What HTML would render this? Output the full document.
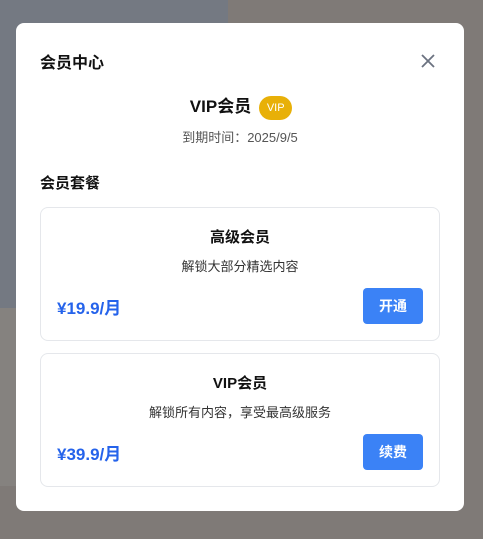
<!DOCTYPE html>
<html><head><meta charset="utf-8"><style>
*{margin:0;padding:0;box-sizing:border-box}
body{width:483px;height:539px;overflow:hidden;position:relative;background:#7f7a77;font-family:"Liberation Sans","Noto Sans CJK SC",sans-serif}
.l{position:absolute;left:0;top:0;width:228px;height:308px;background:#747982}
.l2{position:absolute;left:0;top:308px;width:16px;height:178px;background:#85827f}
.m{position:absolute;left:16px;top:23px;width:448px;height:488px;background:#fff;border-radius:8px}
.t{position:absolute;left:24px;top:26px;font-size:16px;font-weight:bold;color:#111}
.x{position:absolute;left:404px;top:30px}
.v{position:absolute;left:0;width:100%;text-align:center}
.badge{display:inline-block;background:#e8b008;color:#fff;font-size:11px;font-weight:normal;border-radius:12px;width:33px;height:24px;line-height:24px;vertical-align:middle;margin-left:8px;text-align:center}
.card{position:absolute;left:24px;width:400px;height:134px;border:1px solid #e5e7eb;border-radius:8px}
.ct{position:absolute;top:18px;width:100%;text-align:center;font-size:15px;font-weight:bold;color:#111}
.cd{position:absolute;top:48px;width:100%;text-align:center;font-size:13px;color:#333}
.p{position:absolute;left:16px;top:86px;font-size:17px;font-weight:bold;color:#2563eb}
.b{position:absolute;left:322px;top:80px;width:60px;height:36px;background:#3b82f6;color:#fff;border-radius:4px;font-size:14px;font-weight:bold;text-align:center;line-height:36px}
</style></head><body>
<div class="l"></div><div class="l2"></div>
<div class="m">
<div class="t">会员中心</div>
<svg class="x" width="16" height="16" viewBox="0 0 16 16"><path d="M2 2L14 14M14 2L2 14" stroke="#6b7280" stroke-width="1.8"/></svg>
<div class="v" style="top:69px;font-size:17px;color:#111;font-weight:bold;padding-left:2px">VIP会员<span class="badge">VIP</span></div>
<div class="v" style="top:104px;font-size:13px;color:#555">到期时间：2025/9/5</div>
<div class="t" style="top:149px;font-size:15px">会员套餐</div>
<div class="card" style="top:184px"><div class="ct">高级会员</div><div class="cd">解锁大部分精选内容</div><div class="p">¥19.9/月</div><div class="b">开通</div></div>
<div class="card" style="top:330px"><div class="ct">VIP会员</div><div class="cd">解锁所有内容，享受最高级服务</div><div class="p">¥39.9/月</div><div class="b">续费</div></div>
</div>
</body></html>
